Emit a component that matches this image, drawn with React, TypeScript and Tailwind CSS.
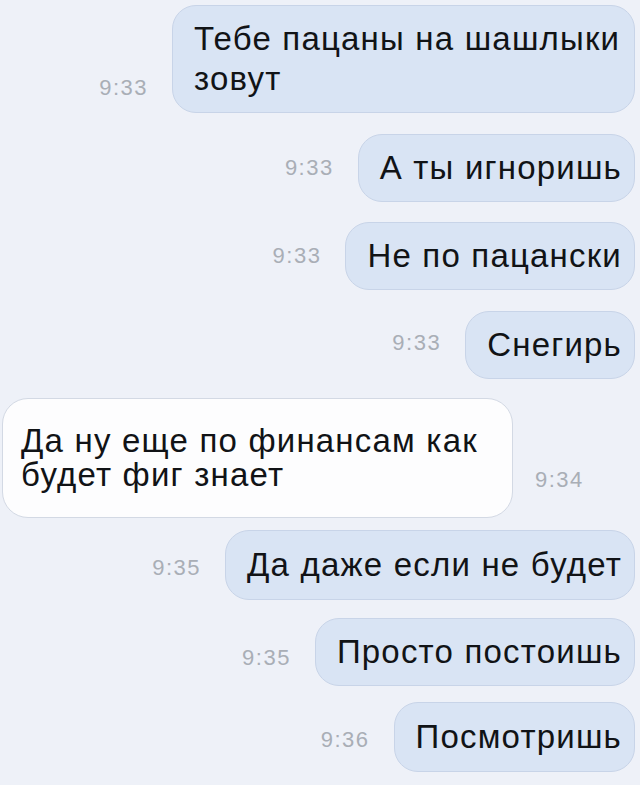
import React from "react";

type Msg = {
  text: string;
  time: string;
  out: boolean;
  row: string;
  bubble: string;
  timeCls: string;
};

const messages: Msg[] = [
  {
    text: "Тебе пацаны на шашлыки зовут",
    time: "9:33",
    out: true,
    row: "mt-[5px]",
    bubble: "w-[463px] py-[13px] leading-[40px]",
    timeCls: "mb-[15px]",
  },
  {
    text: "А ты игноришь",
    time: "9:33",
    out: true,
    row: "mt-[21px]",
    bubble: "py-[13px] leading-[40px]",
    timeCls: "mb-[24px]",
  },
  {
    text: "Не по пацански",
    time: "9:33",
    out: true,
    row: "mt-[20px]",
    bubble: "py-[13px] leading-[40px]",
    timeCls: "mb-[24px]",
  },
  {
    text: "Снегирь",
    time: "9:33",
    out: true,
    row: "mt-[21px]",
    bubble: "py-[13px] leading-[40px]",
    timeCls: "mb-[26px]",
  },
  {
    text: "Да ну еще по финансам как будет фиг знает",
    time: "9:34",
    out: false,
    row: "mt-[19px]",
    bubble: "w-[511px] py-[25px] leading-[34px]",
    timeCls: "mb-[28px]",
  },
  {
    text: "Да даже если не будет",
    time: "9:35",
    out: true,
    row: "mt-[12px]",
    bubble: "py-[14px] leading-[40px]",
    timeCls: "mb-[22px]",
  },
  {
    text: "Просто постоишь",
    time: "9:35",
    out: true,
    row: "mt-[18px]",
    bubble: "py-[13px] leading-[40px]",
    timeCls: "mb-[18px]",
  },
  {
    text: "Посмотришь",
    time: "9:36",
    out: true,
    row: "mt-[16px]",
    bubble: "py-[14px] leading-[40px]",
    timeCls: "mb-[22px]",
  },
];

function Time({ value, cls }: { value: string; cls: string }) {
  return (
    <span
      className={`text-[22px] leading-[20px] tracking-[1.5px] text-[#a9aeb6] shrink-0 ${cls}`}
    >
      {value}
    </span>
  );
}

export default function App() {
  return (
    <div
      className="w-[640px] h-[785px] overflow-hidden bg-[#eef1f8] flex flex-col pr-[5px] text-[#111316]"
      style={{ fontFamily: '"Liberation Sans", Arial, sans-serif' }}
    >
      {messages.map((m, i) =>
        m.out ? (
          <div key={i} className={`flex justify-end items-end gap-[24px] ${m.row}`}>
            <Time value={m.time} cls={m.timeCls} />
            <div
              className={`bg-[#d9e4f4] border border-[#c8d4e8] rounded-[24px] pl-[21px] pr-[12px] text-[33px] tracking-[1.2px] ${m.bubble}`}
            >
              {m.text}
            </div>
          </div>
        ) : (
          <div key={i} className={`flex justify-start items-end gap-[22px] ${m.row}`}>
            <div
              className={`bg-[#fdfdfe] border border-[#d3d9e4] rounded-[26px] ml-[2px] pl-[18px] pr-[30px] text-[33px] tracking-[1.2px] ${m.bubble}`}
            >
              {m.text}
            </div>
            <Time value={m.time} cls={m.timeCls} />
          </div>
        )
      )}
    </div>
  );
}
